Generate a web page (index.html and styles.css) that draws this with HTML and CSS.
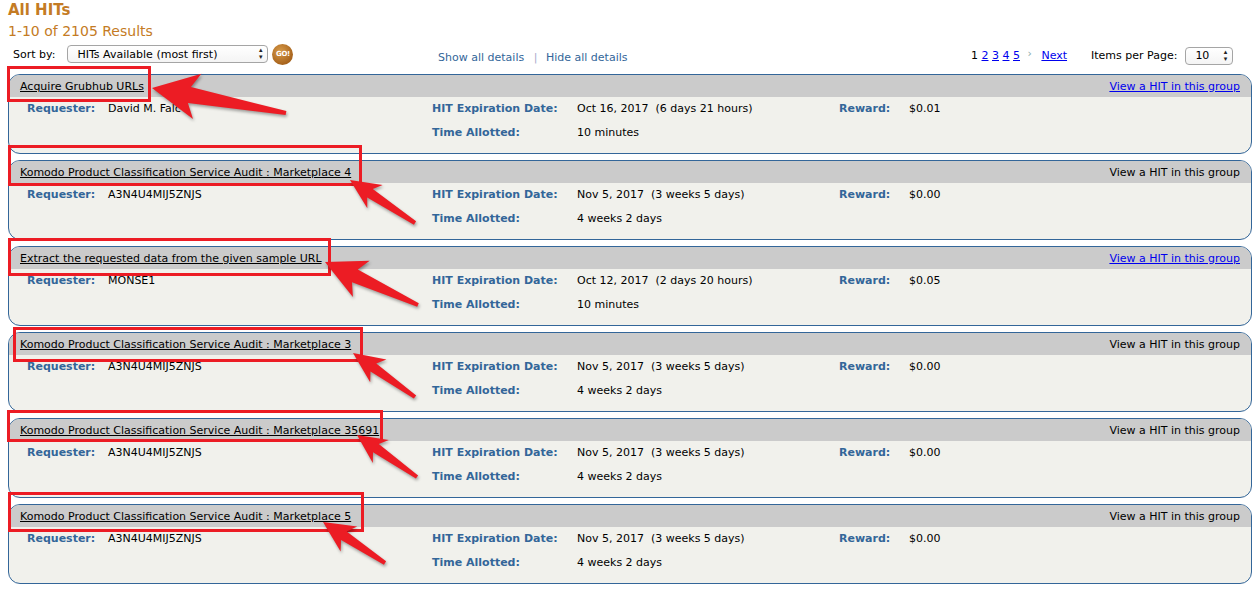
FILE: index.html
```html
<!doctype html>
<html>
  <head>
    <meta charset="UTF-8" />
    <title>All HITs</title>
    <link rel="stylesheet" href="styles.css">
  </head>
  <body>
    <div class="page">
      <h1 class="title">All HITs</h1>
      <div class="results">1-10 of 2105 Results</div>

      <div class="controls">
        <div class="sort">
          <label for="sortBy">Sort by:</label>
          <div class="select-wrap sort-select">
            <select id="sortBy">
              <option>HITs Available (most first)</option>
            </select>
            <span class="select-arrows">▴<br>▾</span>
          </div>
          <button class="go-button">GO!</button>
        </div>

        <div class="details-links">
          <a href="#">Show all details</a>
          <span class="sep">|</span>
          <a href="#">Hide all details</a>
        </div>

        <div class="pager">
          <span class="current">1</span>
          <a href="#">2</a>
          <a href="#">3</a>
          <a href="#">4</a>
          <a href="#">5</a>
          <span class="chevron">›</span>
          <a href="#" class="next">Next</a>
        </div>

        <div class="per-page">
          <label for="perPage">Items per Page:</label>
          <div class="select-wrap page-select">
            <select id="perPage">
              <option>10</option>
            </select>
            <span class="select-arrows">▴<br>▾</span>
          </div>
        </div>
      </div>

      <div class="hit-list">
        <div class="hit-card">
          <div class="hit-header">
            <a href="#" class="hit-title">Acquire Grubhub URLs</a>
            <a href="#" class="hit-view">View a HIT in this group</a>
          </div>
          <div class="hit-body">
            <span class="label">Requester:</span><span>David M. Falc</span>
            <span class="label">HIT Expiration Date:</span><span>Oct 16, 2017&nbsp; (6 days 21 hours)</span>
            <span class="label">Reward:</span><span>$0.01</span>
            <span></span><span></span>
            <span class="label">Time Allotted:</span><span>10 minutes</span>
          </div>
        </div>

        <div class="hit-card">
          <div class="hit-header">
            <a href="#" class="hit-title">Komodo Product Classification Service Audit : Marketplace 4</a>
            <span class="hit-view plain">View a HIT in this group</span>
          </div>
          <div class="hit-body">
            <span class="label">Requester:</span><span>A3N4U4MIJ5ZNJS</span>
            <span class="label">HIT Expiration Date:</span><span>Nov 5, 2017&nbsp; (3 weeks 5 days)</span>
            <span class="label">Reward:</span><span>$0.00</span>
            <span></span><span></span>
            <span class="label">Time Allotted:</span><span>4 weeks 2 days</span>
          </div>
        </div>

        <div class="hit-card">
          <div class="hit-header">
            <a href="#" class="hit-title">Extract the requested data from the given sample URL</a>
            <a href="#" class="hit-view">View a HIT in this group</a>
          </div>
          <div class="hit-body">
            <span class="label">Requester:</span><span>MONSE1</span>
            <span class="label">HIT Expiration Date:</span><span>Oct 12, 2017&nbsp; (2 days 20 hours)</span>
            <span class="label">Reward:</span><span>$0.05</span>
            <span></span><span></span>
            <span class="label">Time Allotted:</span><span>10 minutes</span>
          </div>
        </div>

        <div class="hit-card">
          <div class="hit-header">
            <a href="#" class="hit-title">Komodo Product Classification Service Audit : Marketplace 3</a>
            <span class="hit-view plain">View a HIT in this group</span>
          </div>
          <div class="hit-body">
            <span class="label">Requester:</span><span>A3N4U4MIJ5ZNJS</span>
            <span class="label">HIT Expiration Date:</span><span>Nov 5, 2017&nbsp; (3 weeks 5 days)</span>
            <span class="label">Reward:</span><span>$0.00</span>
            <span></span><span></span>
            <span class="label">Time Allotted:</span><span>4 weeks 2 days</span>
          </div>
        </div>

        <div class="hit-card">
          <div class="hit-header">
            <a href="#" class="hit-title">Komodo Product Classification Service Audit : Marketplace 35691</a>
            <span class="hit-view plain">View a HIT in this group</span>
          </div>
          <div class="hit-body">
            <span class="label">Requester:</span><span>A3N4U4MIJ5ZNJS</span>
            <span class="label">HIT Expiration Date:</span><span>Nov 5, 2017&nbsp; (3 weeks 5 days)</span>
            <span class="label">Reward:</span><span>$0.00</span>
            <span></span><span></span>
            <span class="label">Time Allotted:</span><span>4 weeks 2 days</span>
          </div>
        </div>

        <div class="hit-card">
          <div class="hit-header">
            <a href="#" class="hit-title">Komodo Product Classification Service Audit : Marketplace 5</a>
            <span class="hit-view plain">View a HIT in this group</span>
          </div>
          <div class="hit-body">
            <span class="label">Requester:</span><span>A3N4U4MIJ5ZNJS</span>
            <span class="label">HIT Expiration Date:</span><span>Nov 5, 2017&nbsp; (3 weeks 5 days)</span>
            <span class="label">Reward:</span><span>$0.00</span>
            <span></span><span></span>
            <span class="label">Time Allotted:</span><span>4 weeks 2 days</span>
          </div>
        </div>
      </div>
    </div>

    <!-- screenshot annotations -->
    <svg class="annotations" width="1259" height="589" viewBox="0 0 1259 589">
      <g class="boxes">
        <rect x="8.5" y="67.5" width="141" height="33" />
        <rect x="9.5" y="146.5" width="351" height="38" />
        <rect x="9.5" y="239.5" width="320" height="35" />
        <rect x="14.5" y="328.5" width="347" height="32" />
        <rect x="8.5" y="411.5" width="373" height="29" />
        <rect x="9.5" y="493.5" width="353" height="37" />
      </g>
      <g class="arrows">
        <polygon points="152,88 201.4,73.8 190.9,87.1 286.4,111 285.6,115 187.9,102.9 193,119" />
        <polygon points="350,180 382.7,184.9 372.8,189 416.1,221.3 413.9,224.7 367.2,197.4 367.3,208.3" />
        <polygon points="325,262 369.7,260.7 357.8,269.6 418.8,303.2 417.2,306.8 352,282.2 352.9,296.9" />
        <polygon points="353,353 386.4,359.5 376.3,363.4 416.2,395.4 413.8,398.6 370.5,371.6 370.2,382.3" />
        <polygon points="357,435 388.8,440.1 378.8,444.1 418.1,475.4 415.9,478.6 373,452.3 372.8,463.1" />
        <polygon points="323,522 357.2,526.6 346.7,531.6 386.1,561.3 383.9,564.7 341.1,540 340.6,551.6" />
      </g>
    </svg>
  </body>
</html>
```

FILE: styles.css
```css
:root {
  --orange: #c47b24;
  --blue: #336699;
  --link: #0000ee;
  --card-bg: #f1f1ec;
  --header-bg: #cbcbcb;
  --red: #ec1c24;
}

* {
  margin: 0;
  padding: 0;
  box-sizing: border-box;
}

body {
  font-family: 'DejaVu Sans', Verdana, sans-serif;
  font-size: 11px;
  color: #000;
  background: #fff;
  position: relative;
}

.page {
  padding: 2px 7px 0 8px;
}

.title {
  font-size: 15px;
  font-weight: bold;
  color: var(--orange);
  line-height: 16px;
}

.results {
  font-size: 14px;
  color: var(--orange);
  line-height: 18px;
  margin-top: 4px;
}

/* toolbar */

.controls {
  display: grid;
  grid-template-columns: 425px 533px 120px 1fr;
  align-items: center;
  height: 26px;
  padding-left: 5px;
  margin-top: 1px;
}

.sort {
  display: flex;
  align-items: center;
}

.sort label {
  margin-right: 12px;
}

.select-wrap {
  position: relative;
  height: 18px;
  border: 1px solid #a5a5a5;
  border-radius: 4px;
  background: linear-gradient(#fff, #f4f4f4);
}

.select-wrap select {
  appearance: none;
  -webkit-appearance: none;
  border: none;
  background: transparent;
  font-family: inherit;
  font-size: 11px;
  color: #000;
  width: 100%;
  height: 100%;
  padding-left: 9px;
  outline: none;
}

.select-arrows {
  position: absolute;
  right: 5px;
  top: 1px;
  font-size: 7px;
  line-height: 7px;
  color: #222;
  pointer-events: none;
}

.sort-select {
  width: 201px;
}

.page-select {
  width: 48px;
}

.go-button {
  width: 21px;
  height: 21px;
  margin-left: 4px;
  border: none;
  border-radius: 50%;
  background: radial-gradient(circle at 40% 35%, #d79a48, #a8641d 70%, #8c5215);
  color: #fff;
  font-family: inherit;
  font-size: 7px;
  font-weight: bold;
  letter-spacing: -0.3px;
}

.details-links {
  padding-top: 7px;
  color: var(--blue);
}

.details-links a {
  color: var(--blue);
  text-decoration: none;
}

.details-links .sep {
  color: #aac;
  margin: 0 5px 0 6px;
}

.pager {
  padding-top: 3px;
}

.pager a {
  color: var(--link);
}

.pager .chevron {
  display: inline-block;
  color: #8aa;
  margin: 0 6px 0 4px;
  transform: translateY(-2px);
}

.per-page {
  display: flex;
  align-items: center;
  padding-top: 3px;
}

.per-page label {
  margin-right: 8px;
}

/* hit cards */

.hit-list {
  margin-top: 7px;
}

.hit-card {
  height: 80px;
  margin-bottom: 6px;
  border: 1px solid var(--blue);
  border-radius: 12px;
  background: var(--card-bg);
  overflow: hidden;
}

.hit-header {
  display: flex;
  justify-content: space-between;
  align-items: center;
  height: 22px;
  padding: 0 11px;
  background: var(--header-bg);
}

.hit-title {
  color: #000;
}

.hit-view {
  color: var(--link);
}

.hit-view.plain {
  color: #000;
}

.hit-body {
  display: grid;
  grid-template-columns: 81px 324px 145px 262px 70px 1fr;
  grid-auto-rows: 16px;
  row-gap: 8px;
  align-items: center;
  padding: 3px 0 0 18px;
}

.label {
  font-weight: bold;
  color: var(--blue);
}

/* annotations drawn over the screenshot */

.annotations {
  position: absolute;
  top: 0;
  left: 0;
  pointer-events: none;
}

.boxes rect {
  fill: none;
  stroke: var(--red);
  stroke-width: 3;
}

.arrows polygon {
  fill: var(--red);
  filter: drop-shadow(1px 2px 1.5px rgba(0, 0, 0, 0.35));
}
```
